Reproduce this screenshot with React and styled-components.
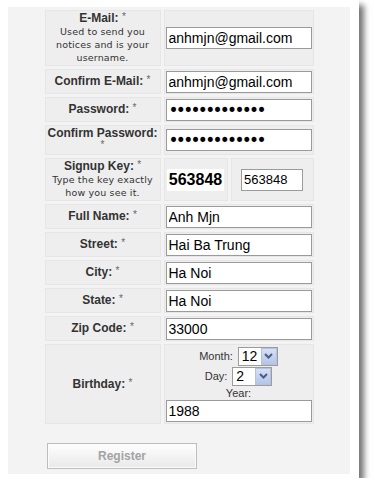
import React from "react";
import styled, { createGlobalStyle } from "styled-components";

const GlobalStyle = createGlobalStyle`
  html, body { margin: 0; padding: 0; background: #fff; }
  body { font-family: "Liberation Sans", Arial, sans-serif; }
`;

const Frame = styled.div`
  width: 359px;
  box-sizing: border-box;
  background: #fff;
  padding: 7px 9px 4px 8px;
  box-shadow: 5px 5px 6px rgba(0, 0, 0, 0.55);
`;

const Panel = styled.div`
  background: #f3f3f3;
  padding: 3px 0 5px;
`;

const Form = styled.div`
  display: grid;
  grid-template-columns: 116px 150px;
  gap: 3px;
  width: 269px;
  margin: 0 auto;
`;

const Cell = styled.div`
  background: #eeeeee;
  border: 1px solid #e6e6e6;
  box-sizing: border-box;
`;

const LabelCell = styled(Cell)`
  display: flex;
  flex-direction: column;
  justify-content: center;
  align-items: center;
  text-align: center;
  padding: 1px 2px;
  font: bold 12px/13px "Liberation Sans", Arial, sans-serif;
  color: #333;
`;

const Req = styled.span`
  font-weight: normal;
  font-size: 10px;
  color: #666;
  position: relative;
  top: -2px;
`;

const Hint = styled.span`
  font: 9.5px/13px "DejaVu Sans", Verdana, sans-serif;
  letter-spacing: 0.15px;
  color: #333;
`;

const ValueCell = styled(Cell)`
  display: flex;
  flex-direction: ${(p) => (p.$stack ? "column" : "row")};
  align-items: center;
  justify-content: center;
  padding: ${(p) => (p.$stack ? "1px 1px 1px" : "0 1px")};
  min-height: 25px;
`;

const Split = styled.div`
  display: grid;
  grid-template-columns: 64px 83px;
  gap: 3px;
`;

const TextInput = styled.input`
  width: ${(p) => (p.$w ? `${p.$w}px` : "100%")};
  height: 22px;
  box-sizing: border-box;
  border: 1px solid #9a9a9a;
  background: #fff;
  padding: 0 2px;
  margin: 0;
  font: ${(p) => p.$size || 14}px "Liberation Sans", Arial, sans-serif;
  color: #000;
  outline: none;
`;

const PasswordInput = styled(TextInput)`
  font: 17px "DejaVu Sans", sans-serif;
  letter-spacing: -2.7px;
`;

const Captcha = styled.span`
  background: #fff;
  padding: 0 2px;
  font: bold 16px/22px "Liberation Sans", Arial, sans-serif;
  color: #000;
`;

const DateLine = styled.div`
  display: flex;
  align-items: center;
  gap: 5px;
  height: ${(p) => p.$h}px;
  font: 11px "Liberation Sans", Arial, sans-serif;
  color: #333;
`;

const YearLabel = styled.div`
  font: 11px/14px "Liberation Sans", Arial, sans-serif;
  color: #333;
`;

const SelectBox = styled.span`
  display: inline-flex;
  align-items: stretch;
  width: ${(p) => p.$w}px;
  height: 19px;
  box-sizing: border-box;
  border: 1px solid #9c9c9c;
  background: #fff;
`;

const Select = styled.select`
  appearance: none;
  -webkit-appearance: none;
  border: none;
  background: transparent;
  flex: 1;
  min-width: 0;
  padding: 0 0 0 3px;
  margin: 0;
  font: 14px "Liberation Sans", Arial, sans-serif;
  color: #000;
  outline: none;
`;

const ArrowButton = styled.span`
  width: 16px;
  display: flex;
  align-items: center;
  justify-content: center;
  box-sizing: border-box;
  border: 1px solid #b6c3de;
  background: linear-gradient(#d6e0f5, #b4c5e9);
`;

const ButtonRow = styled.div`
  margin-top: 19px;
  padding-left: 39px;
`;

const Button = styled.button`
  width: 150px;
  height: 26px;
  box-sizing: border-box;
  border: 1px solid #bdbdbd;
  box-shadow: inset 0 0 0 1px #fbfbfb;
  background: linear-gradient(#fefefe, #e9e9e9);
  font: bold 12px "Liberation Sans", Arial, sans-serif;
  color: #a3a3a3;
  padding: 0;
  margin: 0;
`;

const Chevron = () => (
  <svg width="9" height="6" viewBox="0 0 9 6">
    <polyline points="1,1 4.5,4.5 8,1" fill="none" stroke="#4b5d80" strokeWidth="2" />
  </svg>
);

const DropDown = ({ w, value, options }) => (
  <SelectBox $w={w}>
    <Select defaultValue={value}>
      {options.map((o) => (
        <option key={o} value={o}>
          {o}
        </option>
      ))}
    </Select>
    <ArrowButton>
      <Chevron />
    </ArrowButton>
  </SelectBox>
);

const simpleRows = [
  ["Full Name:", "Anh Mjn"],
  ["Street:", "Hai Ba Trung"],
  ["City:", "Ha Noi"],
  ["State:", "Ha Noi"],
  ["Zip Code:", "33000"],
];

const months = Array.from({ length: 12 }, (_, i) => String(i + 1));
const days = Array.from({ length: 31 }, (_, i) => String(i + 1));

export default function App() {
  return (
    <>
      <GlobalStyle />
      <Frame>
        <Panel>
          <Form>
            <LabelCell>
              <span>
                E-Mail: <Req>*</Req>
              </span>
              <Hint>
                Used to send you
                <br />
                notices and is your
                <br />
                username.
              </Hint>
            </LabelCell>
            <ValueCell>
              <TextInput defaultValue="anhmjn@gmail.com" />
            </ValueCell>

            <LabelCell>
              <span>
                Confirm E-Mail: <Req>*</Req>
              </span>
            </LabelCell>
            <ValueCell>
              <TextInput defaultValue="anhmjn@gmail.com" />
            </ValueCell>

            <LabelCell>
              <span>
                Password: <Req>*</Req>
              </span>
            </LabelCell>
            <ValueCell>
              <PasswordInput type="password" defaultValue="1234567890123" />
            </ValueCell>

            <LabelCell>
              Confirm Password:
              <Req>*</Req>
            </LabelCell>
            <ValueCell>
              <PasswordInput type="password" defaultValue="1234567890123" />
            </ValueCell>

            <LabelCell>
              <span>
                Signup Key: <Req>*</Req>
              </span>
              <Hint>
                Type the key exactly
                <br />
                how you see it.
              </Hint>
            </LabelCell>
            <Split>
              <ValueCell>
                <Captcha>563848</Captcha>
              </ValueCell>
              <ValueCell>
                <TextInput $w={62} $size={13} defaultValue="563848" />
              </ValueCell>
            </Split>

            {simpleRows.map(([label, value]) => (
              <React.Fragment key={label}>
                <LabelCell>
                  <span>
                    {label} <Req>*</Req>
                  </span>
                </LabelCell>
                <ValueCell>
                  <TextInput defaultValue={value} />
                </ValueCell>
              </React.Fragment>
            ))}

            <LabelCell>
              <span>
                Birthday: <Req>*</Req>
              </span>
            </LabelCell>
            <ValueCell $stack>
              <DateLine $h={20}>
                Month:
                <DropDown w={40} value="12" options={months} />
              </DateLine>
              <DateLine $h={20}>
                Day:
                <DropDown w={40} value="2" options={days} />
              </DateLine>
              <YearLabel>Year:</YearLabel>
              <TextInput defaultValue="1988" />
            </ValueCell>
          </Form>
          <ButtonRow>
            <Button type="button">Register</Button>
          </ButtonRow>
        </Panel>
      </Frame>
    </>
  );
}
